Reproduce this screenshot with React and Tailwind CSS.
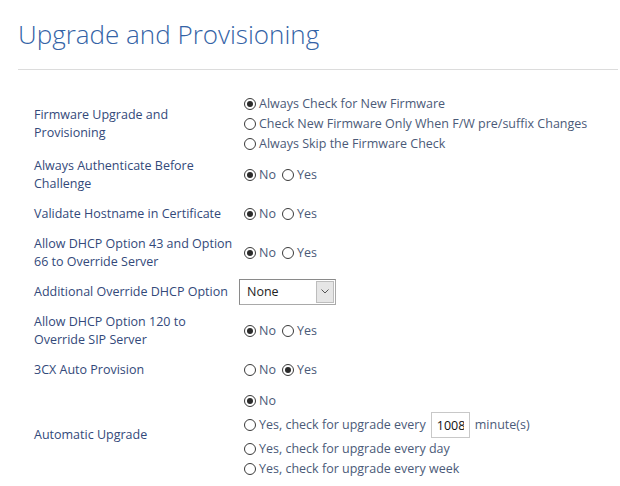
import { useState } from 'react'

const LABEL = 'text-[12.5px] leading-[18px] text-[#33497a]'
const OPT = 'text-[12.5px] leading-[20px] text-[#4b5a78]'

function Radio({ checked }) {
  return (
    <span className="w-[12px] h-[12px] rounded-full border border-[#3a3a3a] bg-white flex items-center justify-center flex-shrink-0">
      {checked && <span className="w-[6px] h-[6px] rounded-full bg-[#2a2a2a]" />}
    </span>
  )
}

function Opt({ checked, children, className = '' }) {
  return (
    <label className={`inline-flex items-center gap-[3px] ${OPT} ${className}`}>
      <Radio checked={checked} />
      <span>{children}</span>
    </label>
  )
}

function NoYes({ yes = false }) {
  return (
    <div className="flex items-center gap-[6px] pl-[5px]">
      <Opt checked={!yes}>No</Opt>
      <Opt checked={yes}>Yes</Opt>
    </div>
  )
}

function Row({ label, children, className = '' }) {
  return (
    <div className={`flex items-center min-h-[39px] py-[1px] ${className}`}>
      <div className={`w-[221px] flex-shrink-0 pl-[16px] pr-[1px] ${LABEL}`}>{label}</div>
      <div className="flex-1">{children}</div>
    </div>
  )
}

export default function App() {
  const [minutes] = useState('10080')

  return (
    <div className="w-[620px] h-[486px] bg-white pl-[18px] pr-[2px] overflow-hidden" style={{ fontFamily: '"Open Sans", "Liberation Sans", sans-serif' }}>
      <h1 className="pt-[16px] text-[26px] leading-[36px] font-light text-[#3463a6]">Upgrade and Provisioning</h1>
      <div className="mt-[17px] h-px bg-[#dcdcdc]" />

      <div className="mt-[23px] flex flex-col">
        <Row label="Firmware Upgrade and Provisioning">
          <div className="flex flex-col pl-[5px]">
            <Opt checked>Always Check for New Firmware</Opt>
            <Opt>Check New Firmware Only When F/W pre/suffix Changes</Opt>
            <Opt>Always Skip the Firmware Check</Opt>
          </div>
        </Row>

        <Row label="Always Authenticate Before Challenge">
          <NoYes />
        </Row>

        <Row label="Validate Hostname in Certificate">
          <NoYes />
        </Row>

        <Row label="Allow DHCP Option 43 and Option 66 to Override Server">
          <NoYes />
        </Row>

        <Row label="Additional Override DHCP Option">
          <div className="w-[97px] h-[26px] flex border border-[#a9a9a9] border-t-[#8a8a8a] border-l-[#8a8a8a] bg-white">
            <span className="flex-1 pl-[7px] text-[12.5px] leading-[24px] text-[#222]">None</span>
            <span className="w-[18px] my-[1px] mr-[1px] bg-[#e6e6e6] border border-[#bdbdbd] flex items-center justify-center">
              <svg width="8" height="5" viewBox="0 0 8 5" fill="none">
                <path d="M0.5 0.5 L4 4 L7.5 0.5" stroke="#555" strokeWidth="1" />
              </svg>
            </span>
          </div>
        </Row>

        <Row label="Allow DHCP Option 120 to Override SIP Server">
          <NoYes />
        </Row>

        <Row label="3CX Auto Provision">
          <NoYes yes />
        </Row>

        <Row label="Automatic Upgrade" className="py-[2px]">
          <div className="flex flex-col pl-[5px]">
            <Opt checked>No</Opt>
            <div className="flex items-center h-[28px]">
              <Opt>Yes, check for upgrade every</Opt>
              <input
                readOnly
                value={minutes}
                className="ml-[5px] w-[39px] h-[26px] border border-[#c8c8c8] px-[5px] text-[12.5px] text-[#111] outline-none"
              />
              <span className={`ml-[5px] ${OPT}`}>minute(s)</span>
            </div>
            <Opt>Yes, check for upgrade every day</Opt>
            <Opt>Yes, check for upgrade every week</Opt>
          </div>
        </Row>
      </div>
    </div>
  )
}
